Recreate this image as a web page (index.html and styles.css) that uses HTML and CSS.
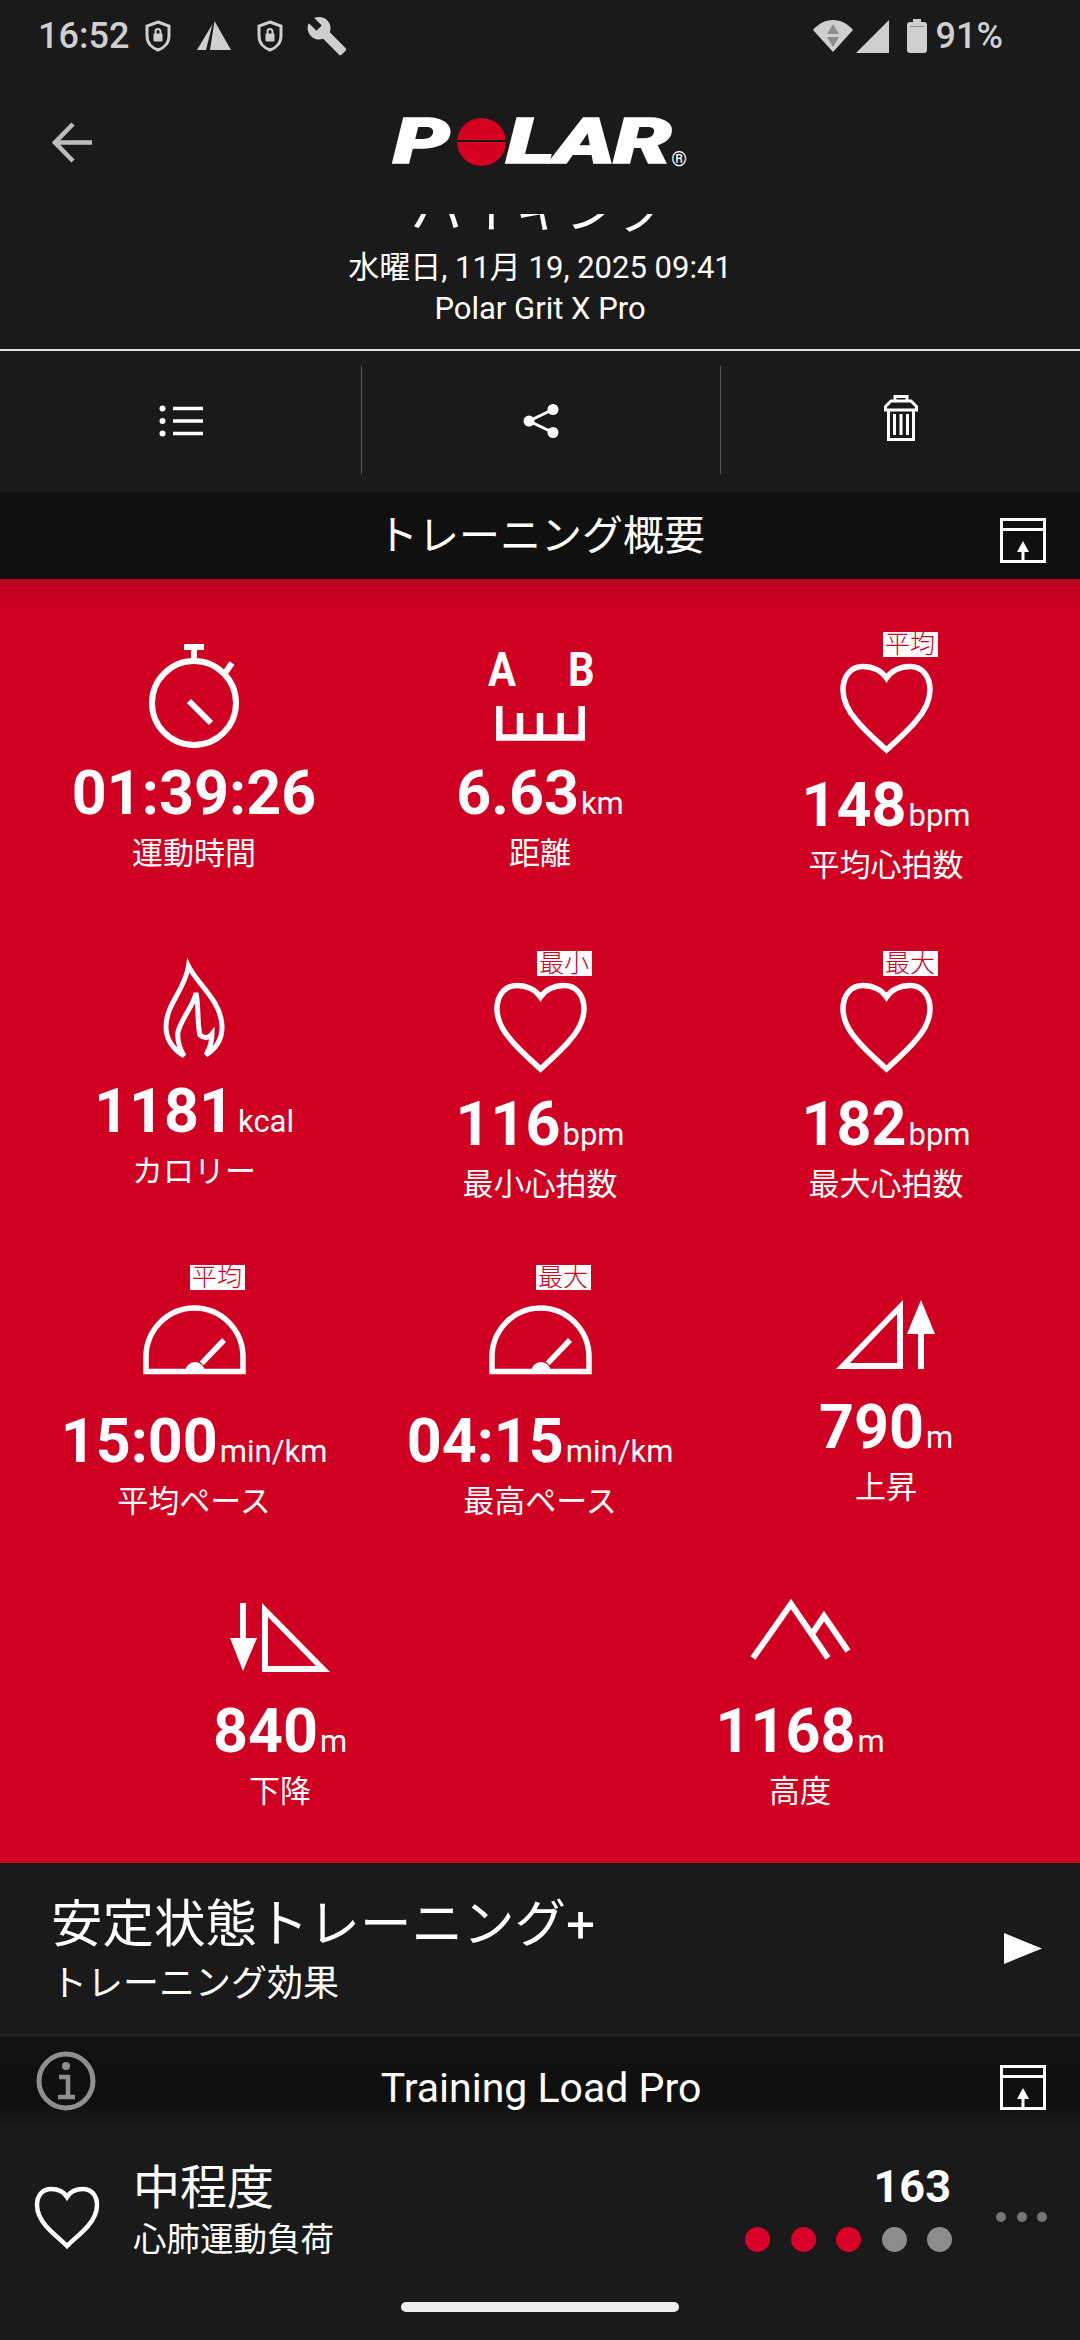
FILE: index.html
```html
<!DOCTYPE html>
<html lang="ja">
<head>
<meta charset="utf-8">
<title>Polar</title>
<link rel="stylesheet" href="styles.css">
</head>
<body>
<div class="app">
  <div class="status">
    <span class="clock">16:52</span>
    <svg class="s-shield s-first" viewBox="0 0 26 32"><path class="sb" d="M13 2 L24 6 V16 C24 23 19 28 13 30 C7 28 2 23 2 16 V6Z"/><rect class="sf" x="8.5" y="13.5" width="9" height="8" rx="1"/><path class="sb2" d="M10.5 14 V11.5 a2.5 2.5 0 0 1 5 0 V14"/></svg>
    <svg class="s-nav" viewBox="0 0 34 30"><path class="sf" d="M15.5 3 L0 29 H9Z"/><path class="sf" d="M17.5 0 L34 29 H13Z"/></svg>
    <svg class="s-shield s-second" viewBox="0 0 26 32"><path class="sb" d="M13 2 L24 6 V16 C24 23 19 28 13 30 C7 28 2 23 2 16 V6Z"/><rect class="sf" x="8.5" y="13.5" width="9" height="8" rx="1"/><path class="sb2" d="M10.5 14 V11.5 a2.5 2.5 0 0 1 5 0 V14"/></svg>
    <svg class="s-wrench" viewBox="0 0 24 24"><path class="sf" d="M22.7 19l-9.1-9.1c.9-2.3.4-5-1.5-6.9-2-2-5-2.4-7.4-1.3L9 6 6 9 1.6 4.7C.4 7.1.9 10.1 2.9 12.1c1.9 1.9 4.6 2.4 6.9 1.5l9.1 9.1c.4.4 1 .4 1.4 0l2.3-2.3c.5-.4.5-1.1.1-1.4z"/></svg>
    <span class="status-gap"></span>
    <svg class="s-wifi" viewBox="0 0 40 32"><path class="sf" d="M20 32 L0 10 C5 4 12 0 20 0 C28 0 35 4 40 10Z"/><path class="sd" d="M20 4 L14 14 H26Z M14 17 H26 L20 27Z"/></svg>
    <svg class="s-signal" viewBox="0 0 33 33"><path class="sf" d="M33 0 V33 H0Z"/></svg>
    <svg class="s-batt" viewBox="0 0 20 34"><path class="sf" d="M6 0 H14 V3 H17 A3 3 0 0 1 20 6 V31 A3 3 0 0 1 17 34 H3 A3 3 0 0 1 0 31 V6 A3 3 0 0 1 3 3 H6Z"/><rect class="sd" x="3" y="7" width="14" height="1"/></svg>
    <span class="pct">91%</span>
  </div>

  <div class="appbar">
    <svg class="back" viewBox="0 0 41 41"><path d="M40 20.5 H4 M21 2 L3 20.5 L21 39"/></svg>
    <div class="logo">
      <span class="logo-p">P</span>
      <span class="logo-o"></span>
      <span class="logo-lar">LAR</span>
      <span class="logo-r">®</span>
    </div>
  </div>

  <div class="meta">
    <div class="clip-title"><span>バイキング</span></div>
    <div class="meta-date">水曜日, 11月 19, 2025 09:41</div>
    <div class="meta-device">Polar Grit X Pro</div>
  </div>

  <div class="toolbar">
    <div class="tool"><svg class="t-list" viewBox="0 0 44 32"><circle cx="3.5" cy="3.5" r="3"/><circle cx="3.5" cy="16" r="3"/><circle cx="3.5" cy="28.5" r="3"/><path d="M14 3.5 H44 M14 16 H44 M14 28.5 H44"/></svg></div>
    <div class="tool"><svg class="t-share" viewBox="0 0 36 34"><circle cx="30" cy="5.5" r="5.5"/><circle cx="6" cy="17" r="5.5"/><circle cx="30" cy="28.5" r="5.5"/><path d="M30 5.5 L6 17 L30 28.5"/></svg></div>
    <div class="tool"><svg class="t-trash" viewBox="0 0 34 46"><path d="M11 6 V1.5 H23 V6 M7 6 H27 L32.5 11.5 V15 H1.5 V11.5Z M4.5 15 V44.5 H29.5 V15 M10.5 19 V40 M17 19 V40 M23.5 19 V40"/></svg></div>
  </div>

  <div class="band">
    <span class="band-side"></span>
    <span class="band-title">トレーニング概要</span>
    <span class="band-side band-right">
      <svg class="export" viewBox="0 0 46 45"><rect x="1.5" y="1.5" width="43" height="42"/><path d="M1.5 11.5 H44.5 M23 30 V44"/><path class="fill" d="M23 23 L29 34 H17Z"/></svg>
    </span>
  </div>

  <div class="stats">
    <div class="stat-grid">
      <div class="stat">
        <div class="icon i-watch"><svg viewBox="0 0 90 104"><path d="M35 3 H55 M45 3 V17 M74 32 L83 19"/><circle cx="45" cy="59" r="42"/><path d="M40 57 L62 79"/></svg></div>
        <div class="value">01:39:26</div><div class="label">運動時間</div>
      </div>
      <div class="stat">
        <div class="icon i-ruler"><svg viewBox="0 0 102 86"><text class="ab" transform="translate(-1 31) scale(.85 1)">A</text><text class="ab" transform="translate(79 31) scale(.85 1)">B</text><path d="M10.3 51 V82.5 H92.7 V51 M31 58 V82 M51 58 V82 M71.7 58 V82"/></svg></div>
        <div class="value">6.63<span class="unit">km</span></div><div class="label">距離</div>
      </div>
      <div class="stat">
        <div class="icon i-heart"><svg viewBox="0 0 93 91"><path d="M46.5 87 C38 79 25 68 17 58 C9 49 3 39 3 27 C3 13 11 3.5 23 3.5 C33 3.5 42 8 46.5 15 C51 8 60 3.5 70 3.5 C82 3.5 90 13 90 27 C90 39 84 49 76 58 C68 68 55 79 46.5 87Z"/></svg><span class="tag tag-heart">平均</span></div>
        <div class="value">148<span class="unit">bpm</span></div><div class="label">平均心拍数</div>
      </div>

      <div class="stat">
        <div class="icon i-flame"><svg viewBox="0 0 62 96"><path d="M25.5 4 C34 22 58 38 59 64 C59.5 77 52 87 43 93 C47 86 49 80 49 72 C46 76 41 77 37 73 C34 62 36 45 33 31 C30 45 19 55 15 70 C14 78 17 87 21 94 C10 87 3 77 3 65 C3 42 22 28 25.5 4Z"/></svg></div>
        <div class="value">1181<span class="unit unit-k">kcal</span></div><div class="label">カロリー</div>
      </div>
      <div class="stat">
        <div class="icon i-heart"><svg viewBox="0 0 93 91"><path d="M46.5 87 C38 79 25 68 17 58 C9 49 3 39 3 27 C3 13 11 3.5 23 3.5 C33 3.5 42 8 46.5 15 C51 8 60 3.5 70 3.5 C82 3.5 90 13 90 27 C90 39 84 49 76 58 C68 68 55 79 46.5 87Z"/></svg><span class="tag tag-heart">最小</span></div>
        <div class="value">116<span class="unit">bpm</span></div><div class="label">最小心拍数</div>
      </div>
      <div class="stat">
        <div class="icon i-heart"><svg viewBox="0 0 93 91"><path d="M46.5 87 C38 79 25 68 17 58 C9 49 3 39 3 27 C3 13 11 3.5 23 3.5 C33 3.5 42 8 46.5 15 C51 8 60 3.5 70 3.5 C82 3.5 90 13 90 27 C90 39 84 49 76 58 C68 68 55 79 46.5 87Z"/></svg><span class="tag tag-heart">最大</span></div>
        <div class="value">182<span class="unit">bpm</span></div><div class="label">最大心拍数</div>
      </div>

      <div class="stat">
        <div class="icon i-gauge"><svg viewBox="0 0 103 69"><path d="M3 66.5 V52 A48.5 49 0 0 1 100 52 V66.5Z"/><path d="M81 35 L58.7 58.3"/><path class="fill" d="M42 67 A10 10 0 0 1 62 67Z"/></svg><span class="tag tag-gauge">平均</span></div>
        <div class="value">15:00<span class="unit">min/km</span></div><div class="label">平均ペース</div>
      </div>
      <div class="stat">
        <div class="icon i-gauge"><svg viewBox="0 0 103 69"><path d="M3 66.5 V52 A48.5 49 0 0 1 100 52 V66.5Z"/><path d="M81 35 L58.7 58.3"/><path class="fill" d="M42 67 A10 10 0 0 1 62 67Z"/></svg><span class="tag tag-gauge">最大</span></div>
        <div class="value">04:15<span class="unit">min/km</span></div><div class="label">最高ペース</div>
      </div>
      <div class="stat">
        <div class="icon i-up"><svg viewBox="0 0 100 69"><path class="fill" fill-rule="evenodd" d="M0 69 L67 0 V69Z M14 63 H61 V14Z"/><path d="M85 69 V28"/><path class="fill" d="M85 0 L99 34 H71Z"/></svg></div>
        <div class="value">790<span class="unit">m</span></div><div class="label">上昇</div>
      </div>
    </div>
    <div class="stat-row">
      <div class="stat">
        <div class="icon i-down"><svg viewBox="0 0 100 69"><path class="fill" fill-rule="evenodd" d="M32 0 L100 69 H32Z M38 14 V63 H86Z"/><path d="M13 0 V40"/><path class="fill" d="M13 68 L0 35 H27Z"/></svg></div>
        <div class="value">840<span class="unit">m</span></div><div class="label">下降</div>
      </div>
      <div class="stat">
        <div class="icon i-mount"><svg viewBox="0 0 101 61"><path d="M3 60 L41 6 L78 60 M62 36 L74 18 L98 53"/></svg></div>
        <div class="value">1168<span class="unit">m</span></div><div class="label">高度</div>
      </div>
    </div>
  </div>

  <div class="effect">
    <div class="effect-text">
      <div class="effect-title">安定状態トレーニング+</div>
      <div class="effect-sub">トレーニング効果</div>
    </div>
    <svg class="play" viewBox="0 0 38 31"><path d="M0 0 L38 15.5 L0 31Z"/></svg>
  </div>

  <div class="band band-load">
    <span class="band-side">
      <svg class="info" viewBox="0 0 60 60"><circle cx="30" cy="30" r="27"/><circle class="dot" cx="30" cy="15" r="4"/><path class="i" d="M23 26 H32 V46 M22 46 H39"/></svg>
    </span>
    <span class="band-title">Training Load Pro</span>
    <span class="band-side band-right">
      <svg class="export" viewBox="0 0 46 45"><rect x="1.5" y="1.5" width="43" height="42"/><path d="M1.5 11.5 H44.5 M23 30 V44"/><path class="fill" d="M23 23 L29 34 H17Z"/></svg>
    </span>
  </div>

  <div class="load">
    <svg class="load-heart" viewBox="0 0 66 64"><path d="M33 60 C27 54 18 47 12 40 C6 33 3 26 3 19 C3 9 9 3 17 3 C24 3 30 6 33 11 C36 6 42 3 49 3 C57 3 63 9 63 19 C63 26 60 33 54 40 C48 47 39 54 33 60Z"/></svg>
    <div class="load-text">
      <div class="load-title">中程度</div>
      <div class="load-sub">心肺運動負荷</div>
    </div>
    <div class="load-score">
      <div class="load-num">163</div>
      <div class="dots"><i class="on"></i><i class="on"></i><i class="on"></i><i></i><i></i></div>
    </div>
    <div class="more"><i></i><i></i><i></i></div>
  </div>

  <div class="home-wrap"><div class="home"></div></div>
</div>
</body>
</html>
```

FILE: styles.css
```css
* { box-sizing: border-box; }
html, body { margin: 0; padding: 0; background: #1a1a1a; }
body { font-family: Roboto, "Noto Sans CJK JP", sans-serif; color: #fff; }
svg { display: block; }
.app { width: 1080px; height: 2340px; overflow: hidden; display: flex; flex-direction: column; background: #1a1a1a; }

/* status bar */
.status { height: 72px; display: flex; align-items: center; padding: 0 77px 0 38px; color: #cfcfcf; font-size: 36px; font-weight: 500; flex: none; }
.clock { width: 90px; line-height: 40px; }
.pct { line-height: 40px; margin-left: 9px; }
.status-gap { flex: 1; }
.sf { fill: #cfcfcf; }
.sd { fill: #8d8d8d; }
.sb { fill: none; stroke: #cfcfcf; stroke-width: 3; }
.sb2 { fill: none; stroke: #cfcfcf; stroke-width: 2; }
.s-shield { width: 26px; height: 32px; }
.s-first { margin-left: 17px; }
.s-second { margin-left: 26px; }
.s-nav { width: 34px; height: 30px; margin-left: 26px; }
.s-wrench { width: 42px; height: 42px; margin-left: 23px; }
.s-wifi { width: 40px; height: 32px; }
.s-signal { width: 33px; height: 33px; margin-left: 3px; }
.s-batt { width: 20px; height: 34px; margin-left: 18px; }

/* app bar */
.appbar { height: 140px; flex: none; display: grid; grid-template-columns: 1fr auto 1fr; align-items: center; padding-left: 52px; padding-right: 52px; }
.back { width: 41px; height: 41px; fill: none; stroke: #bdbdbd; stroke-width: 4.5; }
.logo { display: flex; align-items: center; height: 48px; width: 294px; font-style: italic; font-weight: 900; font-size: 62px; line-height: 48px; color: #fff; position: relative; -webkit-text-stroke: 1.5px #fff; }
.logo-p { width: 64px; display: block; transform: scaleX(1.45); transform-origin: left center; }
.logo-o { width: 49px; height: 48px; border-radius: 50%; background: #d5001f; flex: none; position: relative; }
.logo-o::after { content: ""; position: absolute; left: -2px; right: -2px; top: 22px; height: 2px; background: #1a1a1a; }
.logo-lar { width: 167px; display: block; transform: scaleX(1.49); transform-origin: left center; margin-left: 0; white-space: nowrap; letter-spacing: -1px; }
.logo-r { position: absolute; right: 0; bottom: 0; font-size: 20px; line-height: 14px; font-weight: 400; font-style: normal; -webkit-text-stroke: 0; }

/* meta */
.meta { height: 139px; flex: none; text-align: center; border-bottom: 2px solid #dcdcdc; }
.clip-title { height: 20px; margin-top: 2px; overflow: hidden; display: flex; justify-content: center; align-items: flex-end; font-size: 52px; line-height: 52px; }
.clip-title span { display: block; margin-bottom: -3px; }
.meta-date { margin-top: 14px; font-size: 31px; line-height: 40px; }
.meta-device { font-size: 31px; line-height: 41px; }

/* toolbar */
.toolbar { height: 141px; flex: none; display: grid; grid-template-columns: 361px 359px 360px; padding: 15px 0 18px; }
.tool { display: flex; align-items: center; justify-content: center; border-left: 1px solid #565656; }
.tool:first-child { border-left: 0; }
.t-list { width: 44px; height: 32px; fill: #fff; stroke: none; margin-top: 2px; }
.t-list path { fill: none; stroke: #fff; stroke-width: 3.5; }
.t-share { width: 36px; height: 34px; fill: #fff; margin-top: 2px; }
.t-share path { fill: none; stroke: #fff; stroke-width: 3; }
.t-trash { width: 34px; height: 46px; fill: none; stroke: #fff; stroke-width: 3; margin-bottom: 4px; }

/* section bands */
.band { height: 87px; flex: none; background: #101010; display: grid; grid-template-columns: 1fr auto 1fr; align-items: center; padding: 0 34px 0 36px; }
.band-title { font-size: 41px; line-height: 50px; }
.band-right { display: flex; justify-content: flex-end; }
.export { width: 46px; height: 45px; fill: none; stroke: #fff; stroke-width: 3; margin-top: 9px; }
.export .fill { fill: #fff; stroke: none; }
.band-load { height: 89px; padding-top: 10px; background: linear-gradient(#111 0%, #0f0f0f 70%, #1a1a1a 100%); margin-top: 2px; }
.band-load .export { margin-top: 0; }
.info { width: 60px; height: 60px; fill: none; stroke: #8f8f8f; stroke-width: 5; margin-top: -13px; }
.info .dot { fill: #8f8f8f; stroke: none; }
.info .i { stroke-width: 4.5; }

/* stats */
.stats { height: 1284px; flex: none; background: linear-gradient(#bb0020 0, #cf0022 28px); }
.stat-grid { display: grid; grid-template-columns: repeat(3, 346px); grid-template-rows: 319px 319px 320px; padding: 0 21px; }
.stat-row { display: grid; grid-template-columns: repeat(2, 520px); padding: 0 20px; height: 326px; }
.stat { display: flex; flex-direction: column; align-items: center; }
.icon { position: relative; flex: none; }
.icon svg { width: 100%; height: 100%; fill: none; stroke: #fff; stroke-width: 6; overflow: visible; }
.icon svg .fill { fill: #fff; stroke: none; }
.i-watch { width: 90px; height: 104px; margin: 65px 0 15px; }
.i-ruler { width: 102px; height: 86px; margin: 76px 0 22px; }
.i-ruler svg { stroke-width: 6.5; }
.ab { font-family: Roboto, sans-serif; font-weight: 700; font-size: 49px; fill: #fff; stroke: none; }
.i-heart { width: 93px; height: 91px; margin: 84px 0 21px; }
.i-heart svg { stroke-width: 5.5; }
.i-flame { width: 62px; height: 96px; margin: 64px 0 23px; }
.i-flame svg { stroke-width: 5; }
.i-gauge { width: 103px; height: 69px; margin: 88px 0 37px; }
.i-gauge svg { stroke-width: 5.5; }
.i-up { width: 100px; height: 69px; margin: 83px 0 28px; }
.i-down { width: 100px; height: 69px; margin: 66px 0 29px; }
.i-mount { width: 101px; height: 61px; margin: 61px 0 42px; }
.tag { position: absolute; width: 55px; height: 25px; background: #fff; color: #cf0022; font-size: 25px; line-height: 25px; text-align: center; white-space: nowrap; font-weight: 300; }
.tag-heart { left: 43px; top: -31px; }
.tag-gauge { left: 47px; top: -40px; }
.value { font-size: 61px; line-height: 60px; font-weight: 700; white-space: nowrap; }
.unit { font-size: 31px; line-height: 0; font-weight: 400; margin-left: 2px; }
.unit-k { margin-left: 4px; }
.label { margin-top: 11px; font-size: 31px; line-height: 40px; white-space: nowrap; }

/* training effect */
.effect { height: 173px; flex: none; display: flex; align-items: center; justify-content: space-between; padding: 0 38px 0 51px; border-bottom: 2px solid #222; }
.effect-title { font-size: 51.5px; line-height: 60px; margin-top: 5px; }
.effect-sub { font-size: 36px; line-height: 46px; margin-top: 6px; }
.play { width: 38px; height: 31px; fill: #fff; }

/* load row */
.load { flex: none; height: 158px; display: flex; padding: 34px 0 0 34px; }
.load-heart { width: 66px; height: 64px; fill: none; stroke: #fff; stroke-width: 4.5; margin-top: 25px; flex: none; }
.load-text { margin-left: 33px; width: 621px; }
.load-title { font-size: 47px; line-height: 54px; }
.load-sub { font-size: 33.5px; line-height: 44px; margin-top: 3px; }
.load-score { width: 205px; display: flex; flex-direction: column; align-items: flex-end; margin-left: -8px; }
.load-num { font-size: 45px; font-weight: 700; line-height: 52px; }
.dots { display: flex; gap: 20.5px; margin-top: 14px; margin-right: -1px; }
.dots i { display: block; width: 25px; height: 25px; border-radius: 50%; background: #8c8c8c; }
.dots i.on { background: #d9002a; }
.more { display: flex; gap: 10.5px; margin-left: 45px; margin-top: 51px; height: 10px; }
.more i { display: block; width: 10px; height: 10px; border-radius: 50%; background: #777; }

.home-wrap { flex: 1; display: flex; justify-content: center; padding-top: 17px; }
.home { width: 278px; height: 10px; border-radius: 5px; background: #eee; }
```
